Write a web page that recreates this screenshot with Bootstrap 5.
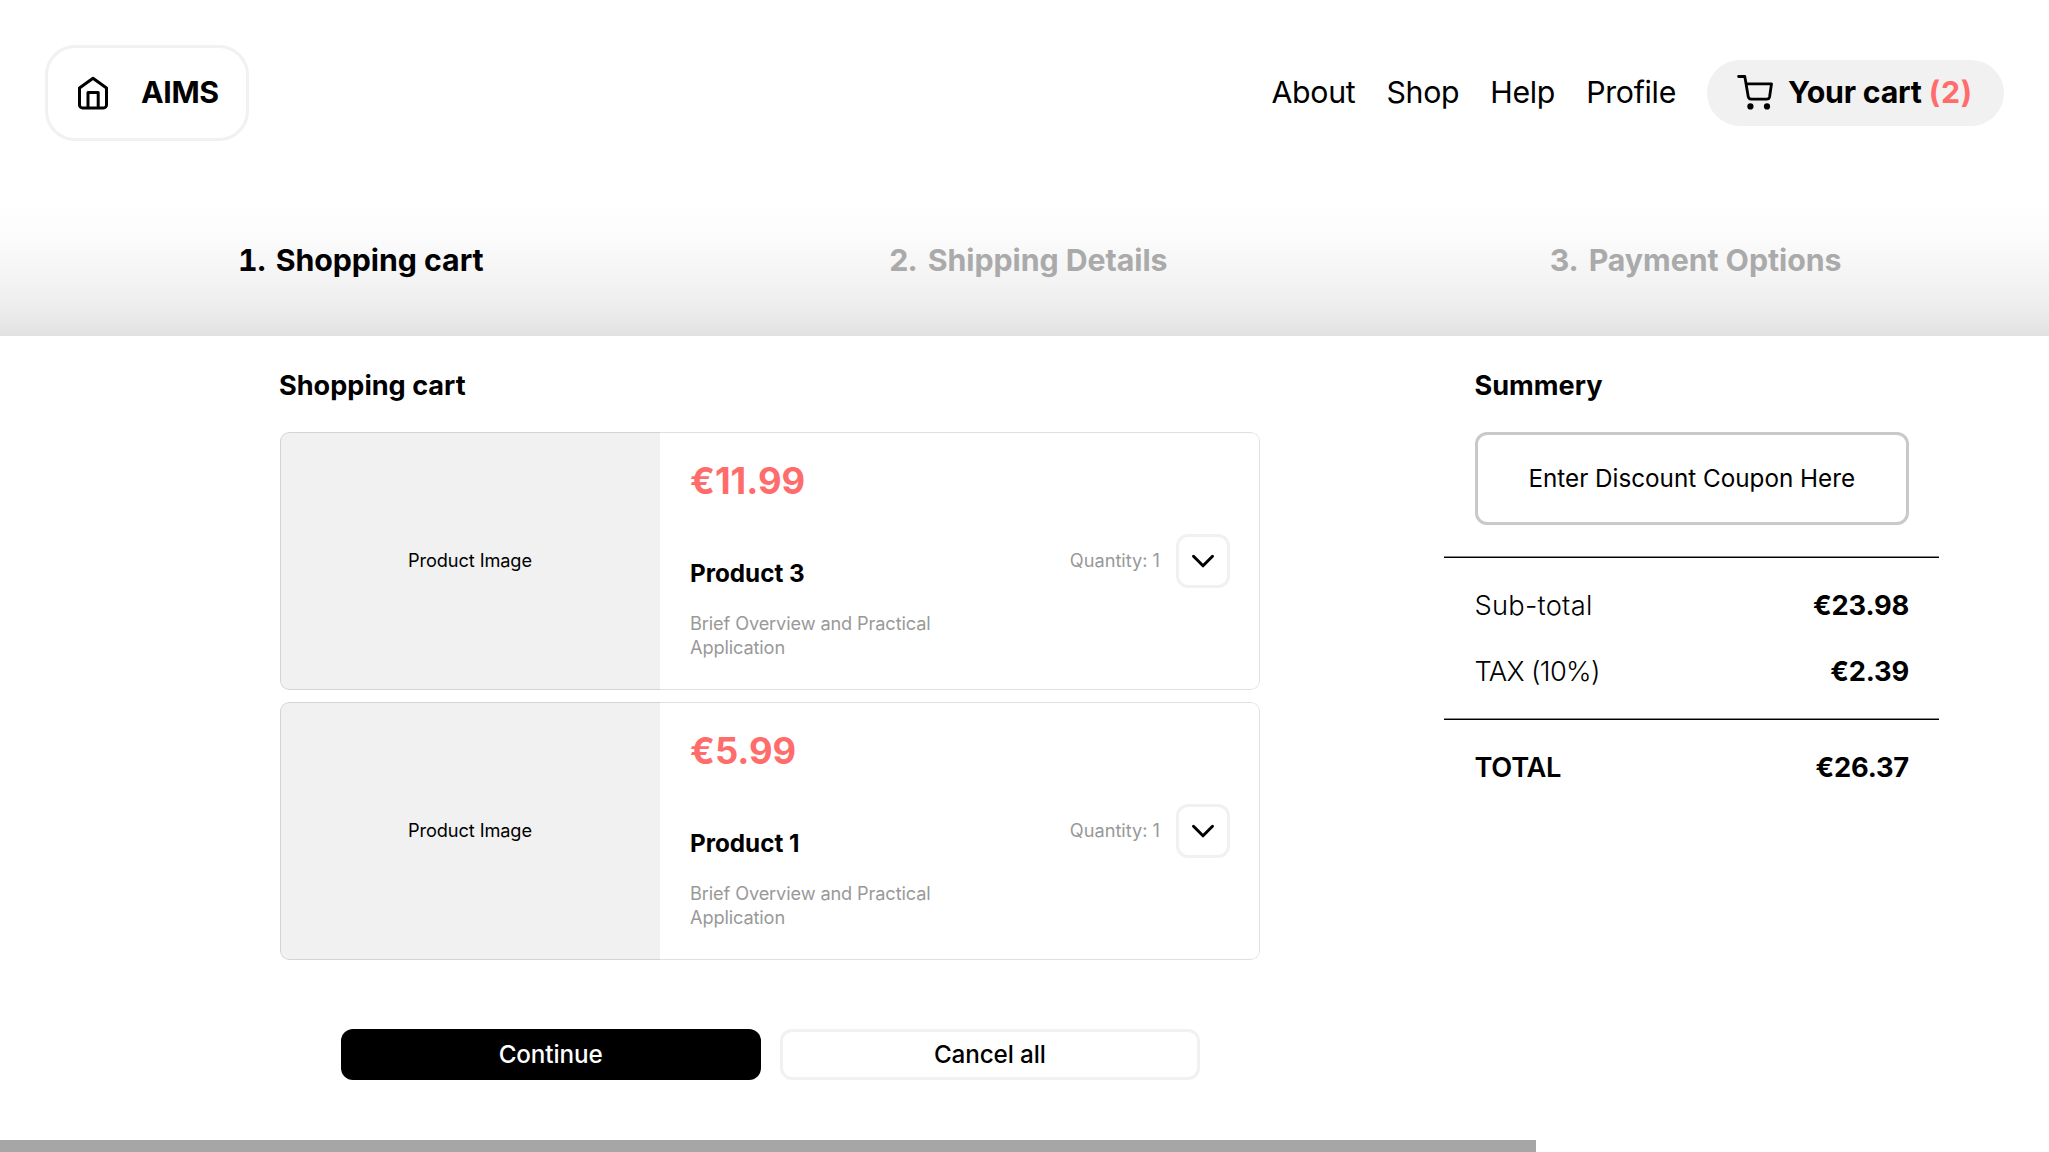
<!DOCTYPE html>
<html lang="en">
<head>
<meta charset="utf-8">
<meta name="viewport" content="width=device-width, initial-scale=1">
<title>AIMS - Shopping cart</title>
<link href="https://cdn.jsdelivr.net/npm/bootstrap@5.3.0/dist/css/bootstrap.min.css" rel="stylesheet">
<style>
  body { font-family: Inter, "Liberation Sans", sans-serif; font-size: 18.18px; line-height: 24.24px; color: #000; background: #fff; overflow: hidden; }
  svg { display: block; flex: none; }
  .text-coral { color: #ff6c6c; }
  .text-soft { color: #999; }

  .topbar { padding: 45px; height: 186px; font-size: 30.3px; line-height: 36px; }
  .home-link { height: 96px; padding: 0 27px; gap: 30px; border: 3px solid #f1f1f1; border-radius: 30px; color: #000; letter-spacing: -.35px; }
  .home-link span, .cart-label { padding-bottom: 2px; }
  .main-nav { gap: 31px; }
  .main-nav .nav-link { color: #000; padding: 0 0 2px; letter-spacing: -.3px; }
  .cart-pill { height: 66px; width: 297px; padding-left: 30px; gap: 15px; background: #f1f1f1; border-radius: 33px; color: #000; letter-spacing: -.2px; }
  .cart-count { letter-spacing: .8px; }

  .steps { height: 150px; font-size: 30.3px; line-height: 36px; color: #aaa; padding-bottom: 2px; letter-spacing: -.05px;
    background: linear-gradient(#fff 0%, #fefefe 20%, #fbfbfb 36%, #f7f7f7 50%, #f3f3f3 64%, #eeeeee 78%, #e8e8e8 90%, #e1e1e1 100%); }
  .steps li { gap: 11px; }
  .steps .step-one { gap: 10px; }
  .steps .step-no { font-variant-numeric: tabular-nums; }
  .step-one { padding-left: 238px; width: 889px; }
  .step-two { width: 661px; }

  .content { padding-left: 280px; gap: 184px; }
  .section-title { font-size: 27.1px; line-height: 33px; margin: 32.5px 0 30.5px; }
  .items-col { width: 980px; }
  .items-col .section-title { margin-left: -1px; }
  .item-list { gap: 12px; }
  .item-card { height: 258px; border-radius: 9px; position: relative; overflow: hidden; }
  .item-card::after { content: ""; position: absolute; inset: 0; border: 1.5px solid rgba(0,0,0,.12); border-radius: 9px; pointer-events: none; }
  .item-image { width: 380px; background: #f1f1f1; letter-spacing: -.1px; padding-bottom: 1px; }
  .item-info { padding: 31px 30px; }
  .item-text { width: 270px; }
  .item-price { font-size: 36.36px; line-height: 36px; }
  .item-name { font-size: 24.24px; line-height: 30px; margin-bottom: 22px; }
  .item-note { letter-spacing: -.12px; }
  .qty-btn { width: 54px; height: 54px; border: 3px solid #f1f1f1; border-radius: 12px; background: #fff; padding: 0; }
  .qty-row { gap: 16px; }
  .qty-label { padding-bottom: 1px; }

  .actions { margin-top: 69px; gap: 19px; padding: 0 60px 0 60.5px; }
  .action-btn { height: 51px; border-radius: 12px; font-size: 24.24px; line-height: 30px; font-weight: 500; letter-spacing: -.1px; padding: 1px 0 0; }
  .cancel-btn { border: 3px solid #f1f1f1; background: #fff; }

  .summary-col { width: 495px; }
  .summary-col .inset { padding-left: 30.5px; padding-right: 30px; }
  .coupon { height: 93px; border: 3px solid #c9c9c9; border-radius: 12px; font-size: 24.24px; padding-top: 2px; }
  .rule { height: 2px; background: #000; border-top: 1px solid #888; }
  .sum-line { font-size: 27.27px; line-height: 33px; }
  .sum-line .fw-bold { letter-spacing: -.2px; }

  .scroll-thumb { height: 12px; width: 1536px; background: #a6a6a6; }
</style>
</head>
<body>
<div class="vh-100 d-flex flex-column">
  <header class="topbar d-flex align-items-start justify-content-between">
    <a href="#" class="home-link d-flex align-items-center fw-bold text-decoration-none">
      <svg width="36" height="36" viewBox="0 0 36 36" fill="none" stroke="#000" stroke-width="3" stroke-linejoin="round">
        <path d="M4.5 13 18 3.2 31.5 13V29.9a3 3 0 0 1-3 3h-21a3 3 0 0 1-3-3z"/>
        <path d="M13 32.5V17.5H23.2V32.5"/>
      </svg>
      <span>AIMS</span>
    </a>
    <div class="main-nav d-flex align-items-center h-100">
      <nav class="nav main-nav">
        <a class="nav-link" href="#">About</a>
        <a class="nav-link" href="#">Shop</a>
        <a class="nav-link" href="#">Help</a>
        <a class="nav-link" href="#">Profile</a>
      </nav>
      <a href="#" class="cart-pill d-flex align-items-center fw-bold text-decoration-none">
        <svg width="36" height="36" viewBox="0 0 36 36" fill="none" stroke="#000" stroke-width="2.8" stroke-linecap="round" stroke-linejoin="round">
          <path d="M1.6 1.5H7.8L11.2 21.6a3 3 0 0 0 3 2.5H29.6a3 3 0 0 0 3-2.4L34.5 8.8H9.2"/>
          <g fill="#000" stroke="none"><circle cx="13.4" cy="31.4" r="3.1"/><circle cx="30" cy="31.4" r="3.1"/></g>
        </svg>
        <span class="cart-label text-nowrap">Your cart <span class="cart-count text-coral">(2)</span></span>
      </a>
    </div>
  </header>

  <ol class="steps list-unstyled d-flex align-items-center mb-0 fw-bold">
    <li class="step-one d-flex text-black"><span class="step-no">1.</span><span>Shopping cart</span></li>
    <li class="step-two d-flex"><span class="step-no">2.</span><span>Shipping Details</span></li>
    <li class="d-flex"><span class="step-no">3.</span><span>Payment Options</span></li>
  </ol>

  <main class="content d-flex align-items-start">
    <section class="items-col">
      <h2 class="section-title fw-bold">Shopping cart</h2>
      <div class="item-list d-flex flex-column">
        <article class="item-card d-flex">
          <div class="item-image d-flex align-items-center justify-content-center">Product Image</div>
          <div class="item-info flex-grow-1 d-flex justify-content-between">
            <div class="item-text d-flex flex-column">
              <div class="item-price fw-bold text-coral">€11.99</div>
              <h3 class="item-name fw-bold mt-auto">Product 3</h3>
              <p class="item-note text-soft mb-0">Brief Overview and Practical Application</p>
            </div>
            <div class="qty-row d-flex align-items-center text-soft"><span class="qty-label">Quantity: 1</span>
              <button class="qty-btn d-flex align-items-center justify-content-center" aria-label="Change quantity">
                <svg width="24" height="14" viewBox="0 0 24 14" fill="none" stroke="#000" stroke-width="3" stroke-linecap="round" stroke-linejoin="round"><path d="M2.5 2.3 12 11.8 21.5 2.3"/></svg>
              </button>
            </div>
          </div>
        </article>
        <article class="item-card d-flex">
          <div class="item-image d-flex align-items-center justify-content-center">Product Image</div>
          <div class="item-info flex-grow-1 d-flex justify-content-between">
            <div class="item-text d-flex flex-column">
              <div class="item-price fw-bold text-coral">€5.99</div>
              <h3 class="item-name fw-bold mt-auto">Product 1</h3>
              <p class="item-note text-soft mb-0">Brief Overview and Practical Application</p>
            </div>
            <div class="qty-row d-flex align-items-center text-soft"><span class="qty-label">Quantity: 1</span>
              <button class="qty-btn d-flex align-items-center justify-content-center" aria-label="Change quantity">
                <svg width="24" height="14" viewBox="0 0 24 14" fill="none" stroke="#000" stroke-width="3" stroke-linecap="round" stroke-linejoin="round"><path d="M2.5 2.3 12 11.8 21.5 2.3"/></svg>
              </button>
            </div>
          </div>
        </article>
      </div>
      <div class="actions d-flex">
        <button class="btn btn-dark action-btn flex-fill w-50 bg-black border-0">Continue</button>
        <button class="btn action-btn cancel-btn flex-fill w-50 text-black">Cancel all</button>
      </div>
    </section>

    <aside class="summary-col">
      <div class="inset">
        <h2 class="section-title fw-bold">Summery</h2>
        <div class="coupon d-flex align-items-center justify-content-center">Enter Discount Coupon Here</div>
      </div>
      <div class="rule" style="margin-top:31px"></div>
      <div class="inset sum-line d-flex justify-content-between" style="margin-top:31px"><span class="fw-light" style="letter-spacing:.25px">Sub-total</span><span class="fw-bold">€23.98</span></div>
      <div class="inset sum-line d-flex justify-content-between" style="margin-top:33px"><span class="fw-light" style="letter-spacing:-.65px">TAX (10%)</span><span class="fw-bold">€2.39</span></div>
      <div class="rule" style="margin-top:30px"></div>
      <div class="inset sum-line d-flex justify-content-between" style="margin-top:31px"><span class="fw-semibold" style="letter-spacing:-.3px">TOTAL</span><span class="fw-bold">€26.37</span></div>
    </aside>
  </main>

  <div class="scroll-thumb mt-auto"></div>
</div>
<script src="https://cdn.jsdelivr.net/npm/bootstrap@5.3.0/dist/js/bootstrap.bundle.min.js"></script>
</body>
</html>
